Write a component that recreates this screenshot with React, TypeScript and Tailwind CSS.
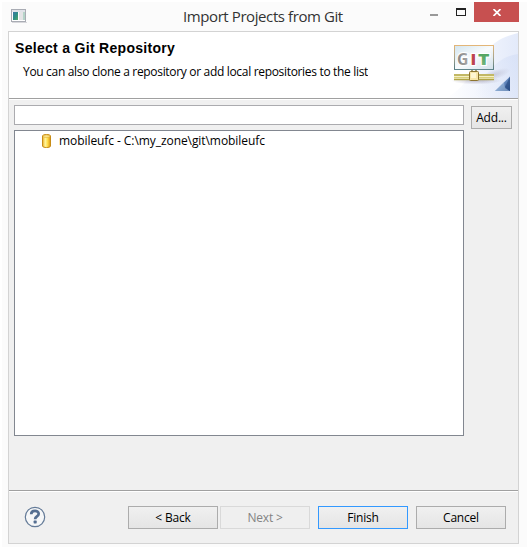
import type { ReactNode } from "react";

const ui = "font-['Open_Sans','Noto_Sans',sans-serif]";

function AppIcon() {
  return (
    <svg width="16" height="14" viewBox="0 0 16 14" shapeRendering="crispEdges">
      <defs>
        <linearGradient id="pane" x1="0" y1="0" x2="1" y2="1">
          <stop offset="0" stopColor="#3f78a8" />
          <stop offset=".5" stopColor="#2d8e86" />
          <stop offset="1" stopColor="#55aa68" />
        </linearGradient>
      </defs>
      <rect x=".5" y=".5" width="14" height="12" fill="#fff" stroke="#a9acb4" />
      <rect x="1" y="1" width="13" height="2" fill="#e1e3e9" />
      <rect x="2" y="3" width="5" height="8" fill="url(#pane)" />
      <rect x="8" y="3" width="4" height="8" fill="#e4e4e6" />
      <rect x="12" y="3" width="2" height="8" fill="#b5d3c8" />
      <rect x="1" y="13" width="15" height="1" fill="#d7d7db" />
    </svg>
  );
}

function Banner() {
  return (
    <svg width="150" height="66" viewBox="0 0 150 66" className="block">
      <defs>
        <linearGradient id="arc" gradientUnits="userSpaceOnUse" x1="78" y1="0" x2="150" y2="0">
          <stop offset="0" stopColor="#fff" />
          <stop offset=".45" stopColor="#f3f6fd" />
          <stop offset="1" stopColor="#e3eafa" />
        </linearGradient>
        <linearGradient id="arcLow" gradientUnits="userSpaceOnUse" x1="105" y1="60" x2="150" y2="30">
          <stop offset="0" stopColor="#d9e2f7" stopOpacity="0" />
          <stop offset="1" stopColor="#d3def6" stopOpacity=".6" />
        </linearGradient>
        <linearGradient id="frame" x1="0" y1="0" x2="0" y2="1">
          <stop offset="0" stopColor="#e3b678" />
          <stop offset=".5" stopColor="#a7a48d" />
          <stop offset="1" stopColor="#50797f" />
        </linearGradient>
        <linearGradient id="screen" x1="0" y1="0" x2="1" y2="1">
          <stop offset="0" stopColor="#d3e5ef" />
          <stop offset=".5" stopColor="#f8fbfd" />
          <stop offset="1" stopColor="#d3e1ea" />
        </linearGradient>
        <linearGradient id="gray" x1="0" x2="1">
          <stop offset="0" stopColor="#858585" />
          <stop offset="1" stopColor="#a8a8a8" />
        </linearGradient>
        <linearGradient id="green" x1="0" y1="0" x2="0" y2="1">
          <stop offset="0" stopColor="#3f9a50" />
          <stop offset="1" stopColor="#7dbb84" />
        </linearGradient>
        <linearGradient id="corner" x1="0" y1="0" x2="1" y2="1">
          <stop offset="0" stopColor="#b6d1ed" />
          <stop offset=".55" stopColor="#6387bd" />
          <stop offset="1" stopColor="#234785" />
        </linearGradient>
        <radialGradient id="shade">
          <stop offset="0" stopColor="#85809a" stopOpacity=".5" />
          <stop offset="1" stopColor="#85809a" stopOpacity="0" />
        </radialGradient>
      </defs>
      <rect width="150" height="66" fill="#fff" />
      <path d="M150 1C120 8 118 22 104 40C98 50 90 60 78 66H150Z" fill="url(#arc)" />
      <path d="M150 22C128 25 118 42 104 66H150Z" fill="url(#arcLow)" />
      <ellipse cx="108" cy="48.5" rx="25" ry="4" fill="url(#shade)" />
      <ellipse cx="126" cy="43" rx="17" ry="5" fill="url(#shade)" opacity=".6" transform="rotate(-18 126 43)" />
      <rect x="86.5" y="13.5" width="39" height="24" fill="url(#screen)" stroke="url(#frame)" />
      <path d="M86 37.5H126" stroke="#5f858c" />
      <g fontFamily="Open Sans, sans-serif" fontWeight="800" stroke="#fff" strokeWidth="2" paintOrder="stroke" fontSize="16.5">
        <text x="89" y="32.5" fill="url(#gray)" textLength="11.5" lengthAdjust="spacingAndGlyphs" fontWeight="700">G</text>
        <text x="102.5" y="32.5" fill="#bd4550">I</text>
        <text x="110" y="32.5" fill="url(#green)" textLength="11.5" lengthAdjust="spacingAndGlyphs">T</text>
      </g>
      <path d="M86 45H126" stroke="#f5f0c4" strokeWidth="6" />
      <path d="M86 43H126M86 47.5H126" stroke="#b1a545" strokeWidth="1.6" />
      <path d="M86 45.5H126" stroke="#d9cf7a" />
      <path d="M104 38V40M108 38V40" stroke="#8a8651" strokeWidth="1.5" />
      <rect x="101.5" y="39.5" width="9" height="9" rx="1" fill="#f8e6a9" stroke="#8d7430" />
      <rect x="103" y="41" width="5" height="5" fill="#fff6d2" />
      <path d="M127 59L142 44.5V59Z" fill="url(#corner)" />
      <path d="M127 59L136 50L137 56L142 59Z" fill="#a7c2e0" opacity=".55" />
      <path d="M137 55L142 59V44.5Z" fill="#294d84" opacity=".7" />
    </svg>
  );
}

function DatabaseIcon() {
  return (
    <svg width="10" height="14" viewBox="0 0 10 14">
      <defs>
        <linearGradient id="gold">
          <stop stopColor="#e8ab20" />
          <stop offset=".35" stopColor="#fff6a0" />
          <stop offset=".65" stopColor="#ffdb45" />
          <stop offset="1" stopColor="#d79212" />
        </linearGradient>
      </defs>
      <path d="M.5 2C.5 0 8.5 0 8.5 2V12C8.5 14 .5 14 .5 12Z" fill="url(#gold)" stroke="#c78c17" />
      <ellipse cx="4.5" cy="2.2" rx="3.4" ry="1.2" fill="#ffe991" stroke="#d5a12b" strokeWidth=".6" />
    </svg>
  );
}

function HelpIcon() {
  return (
    <svg width="22" height="22" viewBox="0 0 22 22" fill="none">
      <circle cx="11" cy="11" r="9.7" fill="#f6f7f8" stroke="#647b98" strokeWidth="1.2" />
      <path d="M7.2 8.3C7.2 3.7 14.7 3.9 14.7 7.8C14.7 10.6 11.1 10.3 11.1 13.3" stroke="#566f91" strokeWidth="2.7" />
      <rect x="9.6" y="14.6" width="3.1" height="2.8" rx=".6" fill="#566f91" />
    </svg>
  );
}

function Button({ children, className }: { children: ReactNode; className: string }) {
  return (
    <button className={`flex h-[23px] shrink-0 items-center justify-center border text-[12px] tracking-[-0.2px] whitespace-nowrap ${className}`}>
      {children}
    </button>
  );
}

const normal = "border-[#acacac] bg-linear-to-b from-[#f0f0f0] to-[#e5e5e5] text-black";

export default function App() {
  return (
    <div className={`h-[549px] w-[527px] overflow-hidden bg-white pt-[2px] pl-[2px] ${ui}`}>
      <div className="flex h-[545px] w-[525px] flex-col bg-[#fbfbfb] pl-[6px]">
        <header className="flex h-[29px] shrink-0">
          <div className="w-[175px] pt-[7px] pl-[3px]"><AppIcon /></div>
          <h1 className="w-[238px] pt-[4px] text-[15px] leading-[20px] tracking-[-0.41px] whitespace-nowrap text-[#333]">Import Projects from Git</h1>
          <div className="flex w-[53px] pt-[6px]">
            <div className="mt-[6px] ml-[9px] h-[2px] w-[8px] bg-[#999]" />
            <div className="ml-[18px] h-[8px] w-[10px] border border-t-2 border-[#222]" />
          </div>
          <button className="flex h-[20px] w-[45px] items-center justify-center bg-[#c75050]">
            <svg width="8" height="7" viewBox="0 0 8 7"><path d="M.5 0L7.5 7M7.5 0L.5 7" stroke="white" strokeWidth="1.7" /></svg>
          </button>
        </header>
        <main className="flex h-[513px] w-[511px] shrink-0 flex-col border border-[#d3d3d3] bg-[#f0f0f0]">
          <section className="flex h-[66px] shrink-0 justify-between bg-white">
            <div className="w-[359px] pl-[6px] whitespace-nowrap text-black">
              <h2 className="pt-[8px] font-['Liberation_Sans',sans-serif] text-[14px] leading-[17px] font-bold tracking-[0.3px]">Select a Git Repository</h2>
              <p className="pt-[7px] pl-[8px] text-[12px] leading-[16px] tracking-[-0.32px]">You can also clone a repository or add local repositories to the list</p>
            </div>
            <Banner />
          </section>
          <div className="h-[2px] shrink-0 border-b border-white bg-[#a0a0a0]" />
          <section className="flex h-[390px] shrink-0 gap-[7px] pt-[5px] pl-[5px]">
            <div className="flex w-[450px] flex-col gap-[5px]">
              <input aria-label="Filter repositories" className="h-[20px] w-full border border-[#ababaf] bg-white px-1 text-[12px] outline-none" />
              <div className="h-[306px] border border-[#828790] bg-white">
                <div className="flex h-[20px] items-center gap-[7px] pl-[27px] text-[12px] tracking-[-0.07px] whitespace-nowrap text-black">
                  <DatabaseIcon />
                  <span>mobileufc - C:\my_zone\git\mobileufc</span>
                </div>
              </div>
            </div>
            <Button className={`mt-px w-[41px] ${normal}`}>Add...</Button>
          </section>
          <div className="h-[2px] shrink-0 border-b border-white bg-[#a0a0a0]" />
          <footer className="flex pt-[14px] pl-[15px]">
            <div className="w-[104px]"><HelpIcon /></div>
            <div className="flex gap-[8px]">
              <div className="flex gap-[2px]">
                <Button className={`w-[90px] ${normal}`}>&lt; Back</Button>
                <Button className="w-[90px] border-[#d9d9d9] bg-[#efefef] text-[#838383]">Next &gt;</Button>
              </div>
              <Button className="w-[90px] border-[#3399ff] bg-linear-to-b from-[#f0f0f0] to-[#e5e5e5] text-black">Finish</Button>
              <Button className={`w-[90px] ${normal}`}>Cancel</Button>
            </div>
          </footer>
        </main>
      </div>
    </div>
  );
}
